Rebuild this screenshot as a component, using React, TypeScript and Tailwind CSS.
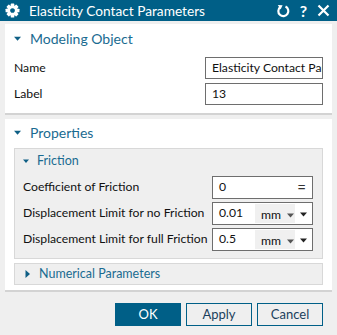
import type { ReactNode } from 'react'

const FONT = { fontFamily: 'Lato, "Open Sans", sans-serif' }

function Gear() {
  const teeth = [0, 45, 90, 135, 180, 225, 270, 315]
  return (
    <svg width="15" height="15" viewBox="0 0 16 16">
      <g transform="translate(8 8)" fill="white">
        {teeth.map((a) => (
          <rect key={a} x="-1.9" y="-7.4" width="3.8" height="3" rx="0.6" transform={`rotate(${a})`} />
        ))}
        <path d="M0 -5.6 A5.6 5.6 0 1 1 -0.01 -5.6 Z M0 -2.5 A2.5 2.5 0 1 0 0.01 -2.5 Z" fillRule="evenodd" />
      </g>
    </svg>
  )
}

function Refresh() {
  return (
    <svg width="14" height="14" viewBox="0 0 14 14" fill="none">
      <path d="M4.2 3.2 A5 5 0 1 0 9.5 2.6" stroke="white" strokeWidth="2.2" />
      <path d="M1.8 1 L6.6 1.2 L4.6 5.4 Z" fill="white" />
    </svg>
  )
}

function Close() {
  return (
    <svg width="13" height="13" viewBox="0 0 13 13">
      <path d="M1.5 1.5 L11.5 11.5 M11.5 1.5 L1.5 11.5" stroke="white" strokeWidth="2.2" />
    </svg>
  )
}

function TriDown({ size = 7 }: { size?: number }) {
  return (
    <svg width={size} height={size} viewBox="0 0 8 8">
      <path d="M0 2 L8 2 L4 6.5 Z" fill="#0f5f85" />
    </svg>
  )
}

function TriRight() {
  return (
    <svg width="7" height="8" viewBox="0 0 7 8">
      <path d="M1.5 0 L6 4 L1.5 8 Z" fill="#0f5f85" />
    </svg>
  )
}

function SmallArrow({ color = '#333' }: { color?: string }) {
  return (
    <svg width="7" height="5" viewBox="0 0 7 5">
      <path d="M0 0.5 L7 0.5 L3.5 4.5 Z" fill={color} />
    </svg>
  )
}

function Row({ label, children }: { label: string; children: ReactNode }) {
  return (
    <div className="flex items-center h-[23px]">
      <span className="flex-1 whitespace-nowrap text-[12.2px] text-[#111]">{label}</span>
      {children}
    </div>
  )
}

function UnitInput({ value }: { value: string }) {
  return (
    <div className="shrink-0 flex items-center w-[101px] h-[23px] border border-[#6e6e6e] bg-white pl-[6px] pr-[5px] text-[12.2px] text-[#111]">
      <span className="w-[36px]">{value}</span>
      <div className="flex items-center gap-[6px] h-[19px] w-[40px] bg-[#f0f0f0] pl-[6px] pt-[3px]">
        <span>mm</span>
        <SmallArrow color="#555" />
      </div>
      <div className="ml-auto pt-[2px]">
        <SmallArrow color="#222" />
      </div>
    </div>
  )
}

export default function App() {
  return (
    <div className="w-[337px] h-[335px] bg-[#efefef] flex flex-col overflow-hidden" style={FONT}>
      {/* Barre de titre */}
      <div className="h-[21px] bg-[#005f87] flex items-center pl-[5px] pr-[7px] text-white">
        <Gear />
        <span className="ml-[9px] text-[13.7px] leading-none">Elasticity Contact Parameters</span>
        <div className="ml-auto flex items-center">
          <Refresh />
          <span className="ml-[10px] text-[16px] font-bold leading-none">?</span>
          <span className="ml-[10px]">
            <Close />
          </span>
        </div>
      </div>

      <div className="px-[5px] pt-[3px]">
        {/* Modeling Object */}
        <div className="bg-white border-b-2 border-[#d3d3d3] h-[91px] px-[9px]">
          <div className="flex items-center h-[27px] pt-[2px]">
            <span className="mr-[9px]">
              <TriDown />
            </span>
            <span className="text-[14px] text-[#1a6b91]">Modeling Object</span>
          </div>
          <div className="flex flex-col gap-[4px] mt-[6px]">
            <div className="flex items-center h-[22px]">
              <span className="flex-1 text-[12.2px] text-[#111]">Name</span>
              <div className="shrink-0 w-[118px] h-[22px] border border-[#6e6e6e] px-[6px] text-[12.2px] text-[#111] whitespace-nowrap overflow-hidden leading-[20px]">
                Elasticity Contact Parameters
              </div>
            </div>
            <div className="flex items-center h-[22px]">
              <span className="flex-1 text-[12.2px] text-[#111]">Label</span>
              <div className="shrink-0 w-[118px] h-[22px] border border-[#6e6e6e] px-[6px] text-[12.2px] text-[#111] leading-[20px]">
                13
              </div>
            </div>
          </div>
        </div>

        {/* Properties */}
        <div className="mt-[4px] bg-white border-b-2 border-[#d3d3d3] h-[173px] px-[9px]">
          <div className="flex items-center h-[24px] pt-[3px]">
            <span className="mr-[9px]">
              <TriDown />
            </span>
            <span className="text-[14px] text-[#1a6b91]">Properties</span>
          </div>

          <div className="mt-[5px] bg-[#efefef] border border-[#d8d8d8] h-[111px] pl-[8px] pr-[9px]">
            <div className="flex items-center h-[24px]">
              <span className="mr-[8px]">
                <TriDown size={6} />
              </span>
              <span className="text-[12.5px] text-[#1a6b91]">Friction</span>
            </div>
            <div className="flex flex-col gap-[3px] mt-[3px]">
              <Row label="Coefficient of Friction">
                <div className="shrink-0 flex items-center w-[101px] h-[23px] border border-[#6e6e6e] bg-white pl-[6px] pr-[6px] text-[12.2px] text-[#111]">
                  <span>0</span>
                  <span className="ml-auto text-[15px] leading-none text-[#333]">=</span>
                </div>
              </Row>
              <Row label="Displacement Limit for no Friction">
                <UnitInput value="0.01" />
              </Row>
              <Row label="Displacement Limit for full Friction">
                <UnitInput value="0.5" />
              </Row>
            </div>
          </div>

          <div className="mt-[4px] bg-[#efefef] border border-[#d8d8d8] h-[22px] pl-[9px] flex items-center">
            <span className="mr-[8px]">
              <TriRight />
            </span>
            <span className="text-[12.5px] text-[#1a6b91]">Numerical Parameters</span>
          </div>
        </div>
      </div>

      {/* Boutons */}
      <div className="flex justify-end gap-[5px] pr-[14px] mt-[11px]">
        <button type="button" className="w-[66px] h-[23px] bg-[#005f87] text-white text-[13px]">
          OK
        </button>
        <button type="button" className="w-[66px] h-[23px] border border-[#005f87] text-[#1b3f5c] text-[13px]">
          Apply
        </button>
        <button type="button" className="w-[66px] h-[23px] border border-[#005f87] text-[#1b3f5c] text-[13px]">
          Cancel
        </button>
      </div>
    </div>
  )
}
